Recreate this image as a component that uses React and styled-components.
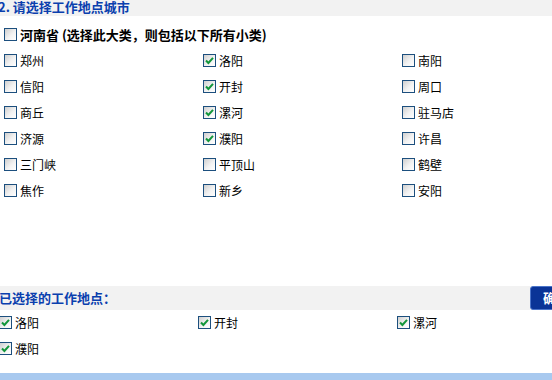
import styled, { createGlobalStyle } from "styled-components"

const Global = createGlobalStyle`
  body {
    margin: 0;
    background: #fff;
    overflow: hidden;
    font-family: "Noto Sans CJK SC", "Liberation Sans", sans-serif;
  }
`

const Page = styled.div`
  width: 600px;
  margin-left: -2px;
  display: flex;
  flex-direction: column;
`

const Bar = styled.div`
  height: ${p => p.$h}px;
  background: #f2f2f2;
  display: flex;
  align-items: ${p => p.$align || "center"};
  justify-content: space-between;
`

const BarTitle = styled.span`
  font-size: 13px;
  font-weight: bold;
  line-height: 14px;
  color: #0a3fae;
  padding-left: ${p => p.$pad || 0}px;
`

const CityPanel = styled.div`
  height: 270px;
  padding: 12px 0 0 6px;
  box-sizing: border-box;
`

const Row = styled.label`
  display: flex;
  align-items: center;
  gap: 3px;
  height: 13px;
  font-size: ${p => (p.$bold ? 13 : 12)}px;
  font-weight: ${p => (p.$bold ? "bold" : "normal")};
  color: #000;
  white-space: nowrap;
`

const Grid = styled.div`
  display: grid;
  grid-template-columns: repeat(3, 199px);
  grid-auto-rows: 13px;
  row-gap: 13px;
  margin-top: ${p => p.$top}px;
`

const Box = styled.span`
  flex: none;
  width: 11px;
  height: 11px;
  border: 1px solid #1c4f7e;
  background: linear-gradient(135deg, #cfcfcf 0%, #f2f2f2 55%, #ffffff 100%);
  display: flex;
  align-items: center;
  justify-content: center;
`

const SelectedPanel = styled.div`
  height: 63px;
  padding: 6px 0 0 1px;
  box-sizing: border-box;
`

const Button = styled.button`
  height: 24px;
  margin-right: 16px;
  padding: 0 12px;
  border: 1px solid #4a74c9;
  border-radius: 3px;
  background: #0a3497;
  color: #fff;
  font-family: inherit;
  font-size: 13px;
  font-weight: bold;
  line-height: 22px;
`

const BottomBar = styled.div`
  height: 10px;
  background: #a8c9ef;
`

function Check({ on, label, bold }) {
  return (
    <Row $bold={bold}>
      <Box>
        {on && (
          <svg width="9" height="9" viewBox="0 0 9 9">
            <path d="M1 4.5 L3.4 7 L8 1.8" fill="none" stroke="#12963a" strokeWidth="2" />
          </svg>
        )}
      </Box>
      {label}
    </Row>
  )
}

const cities = [
  ["郑州", false], ["洛阳", true], ["南阳", false],
  ["信阳", false], ["开封", true], ["周口", false],
  ["商丘", false], ["漯河", true], ["驻马店", false],
  ["济源", false], ["濮阳", true], ["许昌", false],
  ["三门峡", false], ["平顶山", false], ["鹤壁", false],
  ["焦作", false], ["新乡", false], ["安阳", false],
]

export default function App() {
  const picked = cities.filter(c => c[1])
  return (
    <Page>
      <Global />
      <Bar $h={16} $align="flex-start">
        <BarTitle>2. 请选择工作地点城市</BarTitle>
      </Bar>
      <CityPanel>
        <Check label="河南省 (选择此大类，则包括以下所有小类)" bold />
        <Grid $top={13}>
          {cities.map(([name, on]) => (
            <Check key={name} label={name} on={on} />
          ))}
        </Grid>
      </CityPanel>
      <Bar $h={24}>
        <BarTitle $pad={1}>已选择的工作地点：</BarTitle>
        <Button>确定</Button>
      </Bar>
      <SelectedPanel>
        <Grid $top={0}>
          {picked.map(([name]) => (
            <Check key={name} label={name} on />
          ))}
        </Grid>
      </SelectedPanel>
      <BottomBar />
    </Page>
  )
}
